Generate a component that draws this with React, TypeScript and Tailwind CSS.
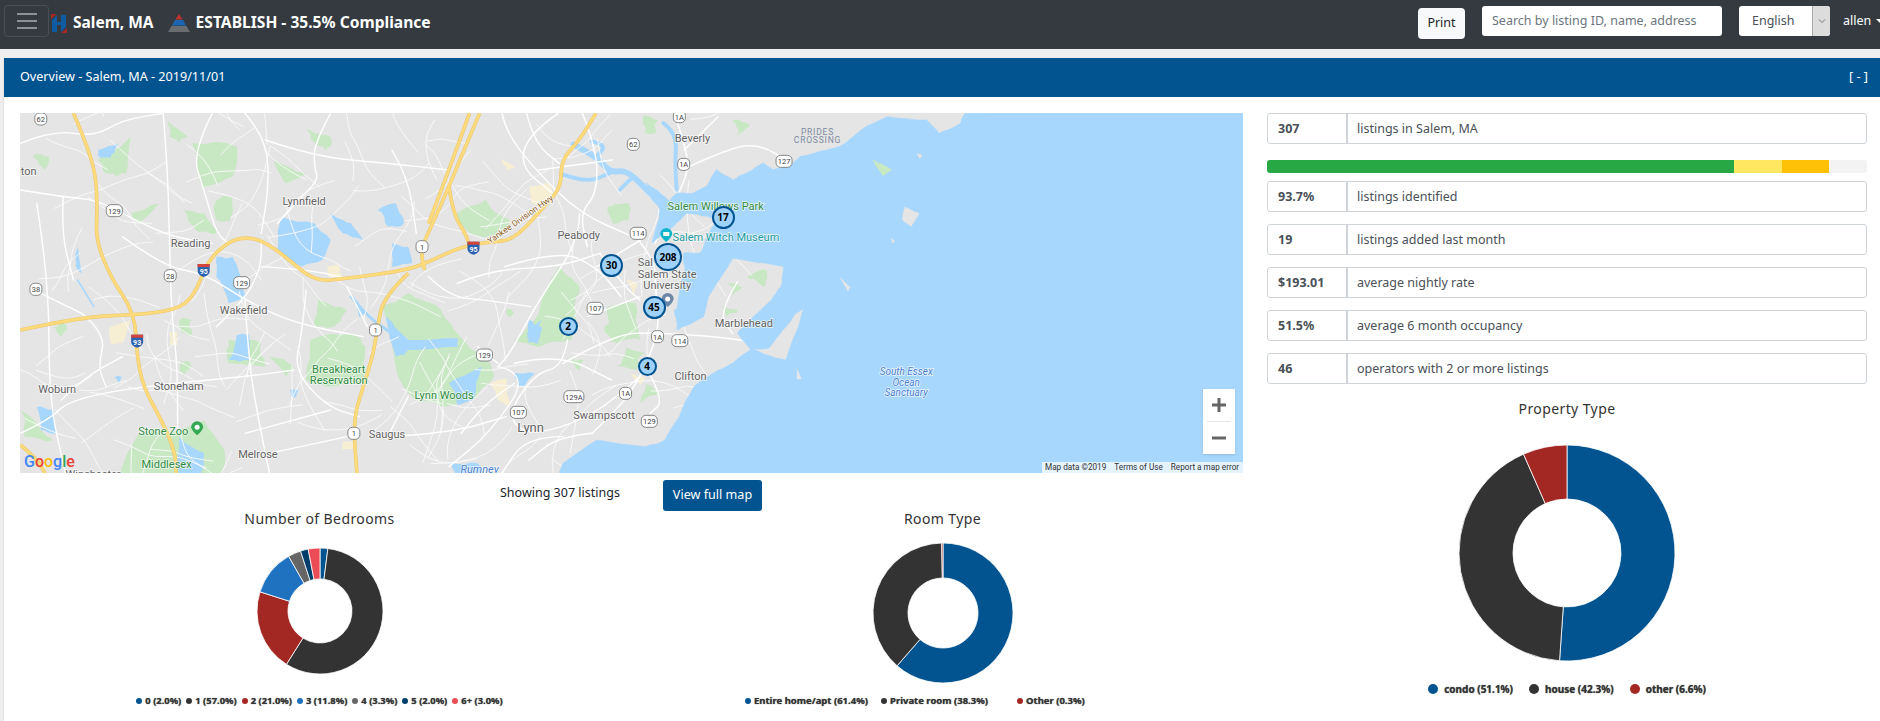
import React from "react";

// reference zoom crops -> map coordinates
type Pt = [number, number];
const z3 = (x: number, y: number): Pt => [x / 2.45 - 20, y / 3 - 13];
const z4 = (x: number, y: number): Pt => [480 + x / 2.063, y / 3 - 13];
const z10 = (x: number, y: number): Pt => [540 + x / 3, y / 3];

const pts = (fn: (x: number, y: number) => Pt, a: number[]) => {
  const out: Pt[] = [];
  for (let i = 0; i < a.length; i += 2) out.push(fn(a[i], a[i + 1]));
  return out;
};

// fixed seed so the map texture is the same on every render
let seed = 1234;
const rnd = () => {
  seed = (seed * 16807) % 2147483647;
  return seed / 2147483647;
};

const rough = (p: Pt[], amp: number, rounds = 2) => {
  let cur = p;
  let a = amp;
  for (let r = 0; r < rounds; r++) {
    const next: Pt[] = [];
    cur.forEach((c, i) => {
      const n = cur[(i + 1) % cur.length];
      next.push(c);
      next.push([(c[0] + n[0]) / 2 + (rnd() - 0.5) * a, (c[1] + n[1]) / 2 + (rnd() - 0.5) * a]);
    });
    cur = next;
    a *= 0.6;
  }
  return cur;
};

const smooth = (p: Pt[]) => {
  let d = `M${p[0][0]} ${p[0][1]}`;
  for (let i = 1; i < p.length - 1; i++) {
    d += `Q${p[i][0]} ${p[i][1]} ${(p[i][0] + p[i + 1][0]) / 2} ${(p[i][1] + p[i + 1][1]) / 2}`;
  }
  const l = p[p.length - 1];
  return d + `L${l[0]} ${l[1]}`;
};

const straight = (p: Pt[]) => "M" + p.map((c) => `${c[0]} ${c[1]}`).join("L") + "Z";

const coast: Pt[] = [
  ...pts(z4, [960, 40, 950, 70, 905, 100, 880, 60, 800, 50, 745, 90]),
  ...pts(z10, [840, 100, 780, 115, 720, 130, 690, 160, 640, 170, 610, 150, 560, 180, 520, 200, 470, 170, 440, 220, 400, 240, 350, 240, 330, 265, 300, 240, 260, 210, 270, 250, 300, 290, 290, 340, 275, 390, 340, 340, 380, 300, 440, 310, 470, 320, 440, 370, 420, 420, 370, 420, 375, 470, 360, 520, 350, 590]),
  ...pts(z4, [360, 630, 365, 690, 420, 650, 430, 590, 470, 500, 480, 475, 550, 490, 585, 500, 580, 560, 560, 600, 510, 670, 490, 700, 515, 745, 555, 745, 610, 640, 628, 625, 620, 660, 590, 780, 570, 775, 520, 745, 480, 790, 440, 820, 400, 860, 370, 950, 340, 1020, 300, 1040, 200, 1020, 130, 1090, 120, 1130]),
];
const sea: Pt[] = [...rough(coast, 2, 2).slice(0, -3), ...pts(z4, [120, 1130, 1600, 1130, 1600, 30])];

const lakes: Pt[][] = [
  pts(z3, [530, 470, 570, 470, 590, 530, 600, 600, 560, 610, 530, 530]),
  pts(z3, [690, 350, 770, 370, 810, 420, 790, 480, 740, 500, 680, 450]),
  pts(z3, [810, 340, 860, 370, 890, 420, 840, 400]),
  pts(z3, [960, 430, 1000, 440, 1010, 490, 960, 500]),
  pts(z3, [925, 330, 970, 310, 990, 370, 950, 380]),
  pts(z3, [945, 650, 1000, 720, 1120, 715, 1125, 740, 1000, 750, 970, 770]),
  pts(z3, [1100, 850, 1180, 800, 1160, 900, 1120, 915]),
  pts(z3, [440, 1010, 500, 1060, 490, 1130, 430, 1130]),
  pts(z3, [90, 920, 130, 930, 140, 1000, 100, 990]),
  pts(z3, [580, 705, 610, 705, 610, 780, 560, 780]),
  pts(z3, [240, 150, 290, 130, 270, 175, 245, 175]),
  pts(z3, [1290, 700, 1325, 660, 1320, 730, 1295, 730]),
  pts(z3, [860, 580, 900, 640, 880, 650]),
  pts(z3, [1260, 820, 1310, 820, 1280, 860]),
  pts(z3, [1100, 1085, 1170, 1090, 1190, 1130, 1120, 1130]),
  pts(z4, [30, 820, 70, 825, 40, 860]),
  pts(z4, [60, 660, 85, 680, 80, 720, 60, 720]),
  pts(z3, [710, 870, 730, 870, 720, 895]),
  pts(z3, [190, 440, 200, 520, 185, 500]),
  pts(z3, [280, 830, 300, 830, 290, 850]),
];

const rivers: [Pt[], number][] = [
  [pts(z10, [40, 95, 110, 130, 150, 180, 200, 170, 270, 240]), 6],
  [pts(z10, [10, 185, 80, 210, 150, 180]), 4],
  [pts(z10, [95, 85, 140, 95, 110, 130]), 4],
  [pts(z10, [180, 230, 220, 190]), 4],
  [pts(z10, [310, 30, 350, 60, 345, 150, 350, 230]), 4],
  [pts(z3, [860, 590, 900, 650, 960, 700]), 3],
  [pts(z3, [190, 540, 230, 620]), 1.5],
];

const parks: Pt[][] = [
  pts(z3, [930, 620, 1000, 580, 1080, 630, 1120, 700, 1190, 780, 1210, 830, 1160, 900, 1080, 920, 1000, 880, 970, 800, 960, 700]),
  pts(z3, [760, 720, 860, 700, 895, 740, 900, 840, 800, 860, 750, 840]),
  pts(z3, [1110, 350, 1190, 300, 1250, 360, 1230, 410, 1150, 400]),
  pts(z3, [470, 130, 580, 140, 570, 230, 500, 260, 480, 200]),
  pts(z3, [1320, 640, 1370, 500, 1420, 560, 1410, 640, 1400, 720, 1320, 740, 1260, 720]),
  pts(z3, [290, 1130, 340, 1000, 420, 1000, 500, 960, 550, 1050, 540, 1130]),
  pts(z3, [240, 180, 320, 110, 310, 220, 260, 220]),
  pts(z3, [410, 60, 460, 110, 440, 130, 415, 110]),
  pts(z3, [530, 300, 570, 290, 560, 370, 530, 360]),
  pts(z3, [670, 180, 750, 220, 700, 250]),
  pts(z3, [750, 85, 810, 110, 800, 150, 765, 120]),
  pts(z3, [450, 330, 500, 340, 530, 400, 480, 390]),
  pts(z3, [320, 340, 390, 310, 340, 370]),
  pts(z3, [780, 600, 850, 630, 820, 680, 770, 680]),
  pts(z3, [660, 770, 720, 800, 700, 830]),
  pts(z3, [560, 720, 640, 730, 650, 800, 560, 790]),
  pts(z3, [50, 930, 100, 990, 130, 1020, 60, 1010]),
  pts(z3, [80, 170, 120, 170, 110, 210]),
  pts(z3, [1490, 320, 1540, 310, 1540, 360, 1500, 370]),
  pts(z3, [1480, 680, 1550, 630, 1568, 720, 1510, 730]),
  pts(z3, [440, 660, 470, 660, 470, 700, 445, 700]),
  pts(z3, [1400, 770, 1430, 780, 1420, 810]),
  pts(z3, [440, 780, 470, 800, 450, 830]),
  pts(z3, [130, 680, 160, 670, 150, 710]),
  pts(z3, [1240, 630, 1260, 640, 1245, 650]),
  pts(z4, [220, 620, 280, 610, 270, 690, 230, 730]),
  pts(z4, [260, 740, 300, 760, 280, 810, 240, 800]),
  pts(z4, [510, 530, 550, 510, 545, 560]),
  pts(z4, [480, 60, 515, 80, 490, 110]),
  pts(z4, [295, 50, 325, 60, 320, 100, 300, 100]),
  pts(z4, [235, 310, 265, 320, 245, 360]),
  pts(z4, [300, 850, 330, 880, 290, 910]),
  pts(z4, [470, 550, 500, 560, 480, 590]),
  pts(z4, [460, 620, 490, 630, 470, 650]),
];

const islands: Pt[][] = [
  pts(z4, [835, 320, 865, 340, 848, 380, 830, 360]),
  pts(z4, [700, 530, 722, 560, 718, 575]),
  pts(z4, [612, 805, 622, 835, 612, 838]),
  pts(z4, [860, 160, 872, 165, 866, 178]),
  pts(z4, [808, 415, 815, 425, 808, 430]),
];

const patches: Pt[][] = [
  pts(z3, [270, 680, 320, 660, 300, 730, 270, 730]),
  pts(z3, [1295, 270, 1345, 250, 1355, 290, 1310, 315]),
  pts(z3, [800, 500, 830, 495, 840, 535, 805, 530]),
  pts(z3, [415, 695, 435, 695, 435, 735, 415, 735]),
  pts(z3, [1200, 850, 1240, 835, 1250, 920, 1220, 900]),
  pts(z3, [840, 1025, 870, 1025, 870, 1050, 840, 1050]),
  pts(z4, [260, 540, 285, 550, 275, 590]),
  pts(z4, [0, 170, 30, 200, 15, 210]),
  pts(z4, [60, 260, 105, 265, 95, 315, 65, 310]),
  pts(z4, [270, 820, 300, 830, 290, 855]),
];

const roads: Pt[][] = [
  [50, 270, 150, 290, 240, 300, 330, 360, 420, 410, 520, 430],
  [520, 40, 470, 160, 500, 270, 530, 400, 560, 430],
  [400, 40, 410, 200, 415, 400, 420, 640, 435, 800, 435, 1000],
  [600, 40, 650, 110, 660, 250, 640, 400],
  [810, 40, 770, 130, 770, 200, 780, 240, 740, 290, 680, 370],
  [650, 120, 770, 170, 950, 190, 1100, 210],
  [960, 150, 1000, 230, 1020, 400],
  [1230, 40, 1240, 100, 1320, 220, 1420, 340, 1550, 410],
  [1290, 40, 1310, 130, 1370, 190],
  [1320, 210, 1500, 180],
  [1420, 340, 1420, 420, 1320, 600, 1250, 760, 1220, 800],
  [1050, 530, 1100, 590, 1190, 600, 1300, 620],
  [1120, 550, 1200, 510, 1370, 500, 1470, 460],
  [50, 1000, 120, 960, 170, 900, 340, 860, 600, 830, 720, 810],
  [100, 580, 200, 640],
  [155, 290, 150, 400, 180, 540],
  [90, 310, 120, 540, 120, 900, 160, 1118],
  [300, 410, 400, 500, 500, 520, 600, 600, 720, 670, 890, 710],
  [600, 600, 610, 800, 640, 1000, 660, 1118],
  [530, 680, 600, 600, 640, 500, 640, 420],
  [750, 570, 740, 700, 720, 810, 800, 920, 880, 950],
  [850, 560, 900, 680],
  [600, 1000, 720, 960, 810, 930],
  [660, 1060, 850, 1010],
  [950, 1010, 1000, 890],
  [1220, 800, 1300, 820, 1200, 1000, 1100, 1100],
  [1390, 720, 1380, 800, 1310, 820, 1240, 950, 1300, 1010, 1450, 950, 1568, 830],
  [1380, 1010, 1290, 1010, 1230, 1118],
  [950, 1010, 1100, 1000, 1240, 950],
  [1170, 740, 1220, 790],
  [1440, 650, 1568, 590],
  [1470, 460, 1530, 560, 1568, 600],
  [50, 130, 130, 90, 230, 110, 300, 60, 400, 40],
  [200, 640, 260, 700, 240, 800, 260, 860],
  [150, 900, 210, 830, 300, 770],
  [640, 500, 760, 510, 850, 535],
  [1130, 1000, 1180, 920, 1260, 850],
].map((a) => pts(z3, a));

const roads4: Pt[][] = [
  [360, 40, 380, 130, 390, 200, 375, 260, 345, 350, 320, 430],
  [390, 200, 480, 140, 540, 135, 600, 190],
  [280, 410, 320, 480, 320, 560, 330, 680, 300, 800, 260, 900, 190, 1000],
  [320, 700, 480, 710, 555, 745],
  [490, 545, 450, 640, 480, 700],
  [200, 500, 290, 420],
  [300, 800, 340, 900, 310, 940],
  [380, 150, 450, 50],
  [120, 40, 60, 100, 40, 200, 110, 280],
  [170, 40, 200, 150, 200, 280, 165, 340, 180, 440],
  [10, 500, 120, 450, 200, 500, 250, 590],
  [130, 790, 240, 700, 320, 700],
  [30, 790, 120, 760, 230, 840],
  [190, 1000, 120, 1010, 60, 1080],
].map((a) => pts(z4, a));

// thin local streets, the sea is painted over whatever falls offshore
const streets: Pt[][] = Array.from({ length: 150 }, () => {
  let x = rnd() * 700;
  let y = rnd() * 360;
  let h = rnd() * Math.PI * 2;
  const line: Pt[] = [[x, y]];
  const steps = 3 + Math.floor(rnd() * 4);
  for (let i = 0; i < steps; i++) {
    h += (rnd() - 0.5) * 1.1;
    const l = 10 + rnd() * 16;
    x += Math.cos(h) * l;
    y += Math.sin(h) * l;
    line.push([x, y]);
  }
  return line;
});

const highways: Pt[][] = [
  [180, 40, 205, 110, 235, 220, 238, 330, 235, 420, 270, 530, 330, 640, 335, 760, 350, 860, 400, 970, 430, 1060, 432, 1130],
  [50, 690, 200, 650, 330, 645, 430, 630, 475, 590, 510, 480, 560, 425, 600, 412, 640, 420, 700, 470, 770, 545, 850, 535, 1000, 510, 1060, 480, 1130, 440, 1200, 425, 1260, 420, 1340, 310, 1375, 260, 1375, 180, 1420, 120, 1460, 40],
  [1175, 40, 1130, 170, 1100, 260, 1060, 370, 1030, 450, 1040, 510],
  [1150, 40, 1100, 210, 1050, 370],
  [1100, 260, 1110, 340, 1140, 400, 1150, 435],
  [1000, 520, 940, 590, 925, 680, 915, 760, 890, 860, 865, 960, 875, 1130],
  [50, 1035, 90, 1075, 115, 1130],
].map((a) => pts(z3, a));

const labels: { p: Pt; t: string; c?: string; s?: number; i?: boolean }[] = [
  { p: z3(745, 302), t: "Lynnfield" },
  { p: z3(467, 428), t: "Reading" },
  { p: z3(597, 631), t: "Wakefield" },
  { p: z3(438, 857), t: "Stoneham" },
  { p: z3(140, 866), t: "Woburn" },
  { p: z3(948, 1002), t: "Saugus" },
  { p: z3(1300, 985), t: "Lynn", s: 13 },
  { p: z3(1480, 946), t: "Swampscott" },
  { p: z3(1418, 405), t: "Peabody" },
  { p: z3(70, 214), t: "ton" },
  { p: z3(632, 1063), t: "Melrose" },
  { p: z3(228, 1122), t: "Winchester" },
  { p: z3(830, 808), t: "Breakheart", c: "#2e8b3d" },
  { p: z3(830, 840), t: "Reservation", c: "#2e8b3d" },
  { p: z3(1088, 885), t: "Lynn Woods", c: "#2e8b3d" },
  { p: z3(400, 992), t: "Stone Zoo", c: "#2e8b3d" },
  { p: z3(408, 1092), t: "Middlesex", c: "#2e8b3d" },
  { p: z3(1175, 1108), t: "Rumney", c: "#4a7fd0", i: true },
  { p: z4(397, 115), t: "Beverly" },
  { p: z4(445, 319), t: "Salem Willows Park", c: "#2e8b3d" },
  { p: z4(466, 410), t: "Salem Witch Museum", c: "#1c9a9e" },
  { p: z4(300, 485), t: "Sal" },
  { p: z4(345, 523), t: "Salem State" },
  { p: z4(345, 555), t: "University" },
  { p: z4(503, 670), t: "Marblehead" },
  { p: z4(393, 828), t: "Clifton" },
  { p: z4(838, 814), t: "South Essex", c: "#4a7fd0", i: true, s: 10 },
  { p: z4(838, 846), t: "Ocean", c: "#4a7fd0", i: true, s: 10 },
  { p: z4(838, 877), t: "Sanctuary", c: "#4a7fd0", i: true, s: 10 },
];

const shields: { p: Pt; t: string }[] = [
  { p: z3(100, 57), t: "62" },
  { p: z3(280, 332), t: "129" },
  { p: z3(417, 527), t: "28" },
  { p: z3(88, 568), t: "38" },
  { p: z3(592, 548), t: "129" },
  { p: z3(1458, 625), t: "107" },
  { p: z3(1187, 765), t: "129" },
  { p: z3(1406, 890), t: "129A" },
  { p: z3(1270, 937), t: "107" },
  { p: z3(1034, 440), t: "1" },
  { p: z3(920, 690), t: "1" },
  { p: z3(867, 1000), t: "1" },
  { p: z4(370, 50), t: "1A" },
  { p: z4(275, 133), t: "62" },
  { p: z4(379, 193), t: "1A" },
  { p: z4(586, 184), t: "127" },
  { p: z4(285, 400), t: "114" },
  { p: z4(325, 710), t: "1A" },
  { p: z4(371, 722), t: "114" },
  { p: z4(259, 880), t: "1A" },
  { p: z4(308, 964), t: "129" },
];

const interstates: { p: Pt; t: string }[] = [
  { p: z3(1160, 443), t: "95" },
  { p: z3(499, 510), t: "95" },
  { p: z3(336, 722), t: "93" },
];

const markers = [
  { t: "208", x: 648, y: 144, r: 14 },
  { t: "17", x: 703, y: 104, r: 11.5 },
  { t: "30", x: 591.5, y: 152, r: 11.5 },
  { t: "45", x: 634, y: 194, r: 11.5 },
  { t: "2", x: 548, y: 213, r: 9.5 },
  { t: "4", x: 627, y: 253, r: 9.5 },
];

const roughPatches = patches.map((p) => straight(rough(p, 3)));
const roughParks = parks.map((p) => straight(rough(p, 6)));
const roughLakes = lakes.map((p) => straight(rough(p, 4)));
const roughIslands = islands.map((p) => straight(rough(p, 1)));

function MapCanvas() {
  return (
    <svg viewBox="0 0 1223 360" className="absolute inset-0 w-full h-full" style={{ fontFamily: "Roboto, sans-serif" }}>
      <rect width="1223" height="360" fill="#e5e5e5" />
      {roughPatches.map((d, i) => <path key={i} d={d} fill="#f6efd3" />)}
      {roughParks.map((d, i) => <path key={i} d={d} fill="#c8e7c3" />)}
      {roughLakes.map((d, i) => <path key={i} d={d} fill="#a8d7fd" />)}
      {rivers.map(([p, w], i) => <path key={i} d={smooth(p)} fill="none" stroke="#a8d7fd" strokeWidth={w} strokeLinecap="round" />)}
      {streets.map((p, i) => <path key={i} d={smooth(p)} fill="none" stroke="#fafafa" strokeWidth="0.9" strokeLinecap="round" />)}
      {roads.map((p, i) => <path key={i} d={smooth(p)} fill="none" stroke="#fff" strokeWidth="1.4" strokeLinecap="round" />)}
      {roads4.map((p, i) => <path key={i} d={smooth(p)} fill="none" stroke="#fff" strokeWidth="1.5" strokeLinecap="round" />)}
      <path d={straight(sea)} fill="#a8d7fd" stroke="#a8d7fd" strokeWidth="0.6" strokeLinejoin="round" />
      {roughIslands.map((d, i) => <path key={i} d={d} fill="#e5e5e5" />)}
      <path d={straight(rough(pts(z4, [768, 178, 810, 210, 790, 228]), 2))} fill="#c8e7c3" />
      {highways.map((p, i) => <path key={i} d={smooth(p)} fill="none" stroke="#efc468" strokeWidth="3.6" />)}
      {highways.map((p, i) => <path key={i} d={smooth(p)} fill="none" stroke="#fcdb7c" strokeWidth="2.6" />)}
      <text x="470" y="131" transform="rotate(-35 470 131)" fontSize="8.5" fill="#8a5a1c" stroke="#fff" strokeWidth="1.5" paintOrder="stroke">Yankee Division Hwy</text>
      {labels.map((l, i) => (
        <text key={i} x={l.p[0]} y={l.p[1] + 4} textAnchor="middle" fontSize={l.s ?? 11} fontStyle={l.i ? "italic" : "normal"} fill={l.c ?? "#616161"} stroke="#fff" strokeOpacity="0.8" strokeWidth="1.4" paintOrder="stroke">{l.t}</text>
      ))}
      <text x={z4(655, 97)[0]} y={z4(655, 97)[1] + 3} textAnchor="middle" fontSize="8.5" letterSpacing="0.8" fill="#7d8aa0">PRIDES</text>
      <text x={z4(655, 119)[0]} y={z4(655, 119)[1] + 3} textAnchor="middle" fontSize="8.5" letterSpacing="0.8" fill="#7d8aa0">CROSSING</text>
      {shields.map((s, i) => {
        const w = s.t.length > 2 ? 16 + (s.t.length - 3) * 4 : 12;
        return (
          <g key={i}>
            <rect x={s.p[0] - w / 2} y={s.p[1] - 6} width={w} height="12" rx="4.5" fill="#fff" stroke="#77797b" strokeWidth="0.9" />
            <text x={s.p[0]} y={s.p[1] + 3} textAnchor="middle" fontSize="7.5" fill="#444">{s.t}</text>
          </g>
        );
      })}
      {interstates.map((s, i) => (
        <g key={i}>
          <path d={`M${s.p[0] - 6} ${s.p[1] - 6}h12v7q0 4-6 6q-6-2-6-6z`} fill="#2b62b0" />
          <rect x={s.p[0] - 6} y={s.p[1] - 6} width="12" height="3" fill="#d3443b" />
          <text x={s.p[0]} y={s.p[1] + 4} textAnchor="middle" fontSize="7" fontWeight="700" fill="#fff">{s.t}</text>
        </g>
      ))}
      {/* poi pins */}
      <g transform={`translate(${z4(343, 405)[0]} ${z4(343, 405)[1]})`}>
        <path d="M-6 -1a6 6 0 1 1 12 0q-1 4-6 8q-5-4-6-8z" fill="#12b5cb" />
        <rect x="-3" y="-3" width="6" height="4" fill="#fff" />
      </g>
      <g transform={`translate(${z4(346, 600)[0]} ${z4(346, 600)[1]})`}>
        <path d="M-6 -1a6 6 0 1 1 12 0q-1 4-6 8q-5-4-6-8z" fill="#6b86a6" />
        <circle r="2.5" cy="-1" fill="#fff" />
      </g>
      <g transform={`translate(${z3(483, 985)[0]} ${z3(483, 985)[1]})`}>
        <path d="M-6 -1a6 6 0 1 1 12 0q-1 4-6 8q-5-4-6-8z" fill="#34a853" />
        <circle r="2.5" cy="-1" fill="#fff" />
      </g>
    </svg>
  );
}

function Donut({ size, r, inner, data }: { size: number; r: number; inner: number; data: { v: number; c: string }[] }) {
  const total = data.reduce((s, d) => s + d.v, 0);
  const c = size / 2;
  let acc = 0;
  const pos = (rad: number, a: number) => `${c + rad * Math.sin(a)} ${c - rad * Math.cos(a)}`;
  return (
    <svg width={size} height={size} className="block">
      {data.map((d, i) => {
        const a0 = (acc / total) * Math.PI * 2;
        acc += d.v;
        const a1 = (acc / total) * Math.PI * 2;
        const large = a1 - a0 > Math.PI ? 1 : 0;
        return (
          <path
            key={i}
            d={`M${pos(r, a0)}A${r} ${r} 0 ${large} 1 ${pos(r, a1)}L${pos(inner, a1)}A${inner} ${inner} 0 ${large} 0 ${pos(inner, a0)}Z`}
            fill={d.c}
            stroke="#fff"
            strokeWidth="0.8"
          />
        );
      })}
    </svg>
  );
}

const BLUE = "#01548f";
const DARK = "#333333";
const RED = "#a32824";

const bedrooms = [
  { v: 2, c: BLUE, t: "0 (2.0%)" },
  { v: 57, c: DARK, t: "1 (57.0%)" },
  { v: 21, c: RED, t: "2 (21.0%)" },
  { v: 11.8, c: "#1f72bf", t: "3 (11.8%)" },
  { v: 3.3, c: "#666666", t: "4 (3.3%)" },
  { v: 2, c: "#003f6b", t: "5 (2.0%)" },
  { v: 3, c: "#ec4c55", t: "6+ (3.0%)" },
];
const roomTypes = [
  { v: 61.4, c: BLUE, t: "Entire home/apt (61.4%)" },
  { v: 38.3, c: DARK, t: "Private room (38.3%)" },
  { v: 0.3, c: RED, t: "Other (0.3%)" },
];
const propertyTypes = [
  { v: 51.1, c: BLUE, t: "condo (51.1%)" },
  { v: 42.3, c: DARK, t: "house (42.3%)" },
  { v: 6.6, c: RED, t: "other (6.6%)" },
];

const stats = [
  { v: "93.7%", t: "listings identified" },
  { v: "19", t: "listings added last month" },
  { v: "$193.01", t: "average nightly rate" },
  { v: "51.5%", t: "average 6 month occupancy" },
  { v: "46", t: "operators with 2 or more listings" },
];

function StatRow({ v, t }: { v: string; t: string }) {
  return (
    <div className="flex h-[31px] rounded-[3px] border border-[#ced4da] text-[12.5px] text-[#495057]">
      <div className="w-[80px] flex items-center pl-[10px] pt-px font-bold border-r-2 border-[#ced4da]">{v}</div>
      <div className="flex items-center pl-[9px] pt-px">{t}</div>
    </div>
  );
}

function SmallLegend({ items }: { items: { c: string; t: string }[] }) {
  return (
    <div className="flex justify-center gap-[5px] text-[9.4px] font-bold text-[#333] leading-[14px] whitespace-nowrap [text-shadow:0_0_1px_#555]">
      {items.map((d) => (
        <div key={d.t} className="flex items-center gap-[3px]">
          <span className="w-[6px] h-[6px] rounded-full" style={{ background: d.c }} />
          {d.t}
        </div>
      ))}
    </div>
  );
}

export default function App() {
  return (
    <div className="h-[721px] overflow-hidden bg-[#eeeeee] flex flex-col" style={{ fontFamily: '"Noto Sans", sans-serif' }}>
      {/* top navbar */}
      <nav className="h-[49px] shrink-0 bg-[#343a40] flex items-start text-white overflow-hidden">
        <button className="ml-[4px] mt-[5px] w-[45px] h-[32px] rounded border border-[#4a4f55] flex flex-col items-center justify-center gap-[5px]">
          <span className="block w-[20px] h-[2px] bg-[#8e9194]" />
          <span className="block w-[20px] h-[2px] bg-[#8e9194]" />
          <span className="block w-[20px] h-[2px] bg-[#8e9194]" />
        </button>
        <svg width="16" height="19" viewBox="0 0 16 19" className="ml-[2px] mt-[14px]">
          <path d="M0 0h6l-6 5z" fill="#a32824" />
          <path d="M16 19h-6l6-5z" fill="#a32824" />
          <path d="M1 6l5-5v7h4V1h5v12l-5 5v-7H6v7H1z" fill="#0f5ba3" />
        </svg>
        <span className="ml-[6px] mt-[12px] text-[15.5px] leading-[20px] font-bold">Salem, MA</span>
        <svg width="24" height="19" viewBox="0 0 24 19" className="ml-[13px] mt-[14px]">
          <path d="M12 0l3.5 5.5h-7z" fill="#c0322c" />
          <path d="M8 6h8l3 5.5H5z" fill="#1b66b3" />
          <path d="M4.6 12h14.8l3.6 6H1z" fill="#6a6d70" />
        </svg>
        <span className="ml-[5px] mt-[12px] text-[15.6px] leading-[20px] font-bold whitespace-nowrap">ESTABLISH - 35.5% Compliance</span>
        <div className="ml-auto flex items-start shrink-0 w-[462px]">
          <button className="mt-[8px] w-[47px] h-[31px] shrink-0 rounded bg-[#f8f9fa] text-[#212529] text-[12.5px]">Print</button>
          <div className="ml-[17px] mt-[6px] w-[240px] h-[30px] shrink-0 rounded-[3px] bg-white flex items-center pl-[10px] text-[12.5px] text-[#6c757d] whitespace-nowrap">Search by listing ID, name, address</div>
          <div className="ml-[17px] mt-[6px] w-[91px] h-[30px] shrink-0 rounded-[3px] bg-white flex overflow-hidden text-[12.5px] text-[#495057]">
            <div className="flex-1 flex items-center pl-[13px]">English</div>
            <div className="w-[18px] bg-[#dcdcdc] border-l border-[#aaa] flex items-center justify-center">
              <svg width="8" height="6" viewBox="0 0 8 6"><path d="M1 1.5l3 3 3-3" fill="none" stroke="#777" strokeWidth="1" /></svg>
            </div>
          </div>
          <span className="ml-[13px] mt-[11px] shrink-0 text-[12.5px] leading-[20px] whitespace-nowrap">allen</span>
          <span className="ml-[5px] mt-[19px] shrink-0 w-0 h-0 border-x-[4px] border-x-transparent border-t-[4px] border-t-white" />
        </div>
      </nav>

      <div className="flex-1 mt-[9px] ml-[3px] bg-white flex flex-col rounded-t-[2px] border-l border-[#e2e2e2]">
        <div className="h-[39px] shrink-0 bg-[#01548f] text-white text-[12.6px] flex items-center justify-between pl-[16px] pr-[12px]">
          <span>Overview - Salem, MA - 2019/11/01</span>
          <span>[ - ]</span>
        </div>
        <div className="flex pl-[16px] pt-[16px]">
          {/* left column */}
          <div className="w-[1223px] shrink-0">
            <div className="relative h-[360px] overflow-hidden">
              <MapCanvas />
              {markers.map((m) => (
                <div
                  key={m.t}
                  className="absolute rounded-full border-2 border-[#01548f] bg-[#9fd2fb] flex items-center justify-center text-[10px] font-bold text-black"
                  style={{ left: m.x - m.r, top: m.y - m.r, width: m.r * 2, height: m.r * 2 }}
                >
                  {m.t}
                </div>
              ))}
              <div className="absolute left-[4px] bottom-[2px] text-[16px] font-medium leading-[18px]" style={{ fontFamily: "Roboto, sans-serif" }}>
                <span className="text-[#4285f4]">G</span><span className="text-[#ea4335]">o</span><span className="text-[#fbbc05]">o</span><span className="text-[#4285f4]">g</span><span className="text-[#34a853]">l</span><span className="text-[#ea4335]">e</span>
              </div>
              <div className="absolute right-[8px] top-[276px] w-[32px] h-[65px] bg-white flex flex-col items-center shadow-sm">
                <div className="h-[32px] flex items-center justify-center">
                  <svg width="14" height="14" viewBox="0 0 14 14"><path d="M5.5 0h3v5.5H14v3H8.5V14h-3V8.5H0v-3h5.5z" fill="#666" /></svg>
                </div>
                <div className="w-[24px] h-px bg-[#e6e6e6]" />
                <div className="h-[32px] flex items-center justify-center">
                  <svg width="14" height="14" viewBox="0 0 14 14"><path d="M0 5.5h14v3H0z" fill="#666" /></svg>
                </div>
              </div>
              <div className="absolute right-0 bottom-0 h-[11px] w-[201px] bg-white/70 flex items-center pl-[3px] text-[8.2px] leading-none text-[#333] whitespace-nowrap" style={{ fontFamily: "Roboto, sans-serif" }}>
                <span>Map data ©2019</span>
                <span className="ml-[8px]">Terms of Use</span>
                <span className="ml-[8px]">Report a map error</span>
              </div>
            </div>

            <div className="flex items-start h-[37px]">
              <span className="ml-[480px] mt-[11px] w-[163px] text-[12.5px] leading-[18px] text-[#212529] whitespace-nowrap">Showing 307 listings</span>
              <button className="mt-[7px] w-[99px] h-[31px] rounded-[3px] bg-[#01548f] text-white text-[12.6px]">View full map</button>
            </div>

            <div className="flex">
              <div className="w-[602px] flex flex-col items-center">
                <h3 className="text-[14px] leading-[18px] tracking-[0.4px] text-[#333]">Number of Bedrooms</h3>
                <div className="mt-[18px]"><Donut size={130} r={63} inner={32} data={bedrooms} /></div>
                <div className="mt-[18px]"><SmallLegend items={bedrooms} /></div>
              </div>
              <div className="ml-[23px] w-[604px] flex flex-col">
                <h3 className="text-center text-[14px] leading-[18px] tracking-[0.4px] text-[#333]">Room Type</h3>
                <div className="mt-[13px] self-center"><Donut size={144} r={70} inner={35} data={roomTypes} /></div>
                <div className="mt-[9px] ml-[103px] flex text-[9.5px] font-bold text-[#333] leading-[14px] whitespace-nowrap [text-shadow:0_0_1px_#555]">
                  {roomTypes.map((d) => (
                    <div key={d.t} className="w-[136px] flex items-center gap-[3px]">
                      <span className="w-[6px] h-[6px] rounded-full" style={{ background: d.c }} />
                      {d.t}
                    </div>
                  ))}
                </div>
              </div>
            </div>
          </div>

          {/* right column */}
          <div className="ml-[24px] w-[600px] shrink-0">
            <StatRow v="307" t="listings in Salem, MA" />
            <div className="mt-[16px] mb-[8px] h-[13px] flex rounded-[3px] overflow-hidden bg-[#f3f3f3]">
              <div className="w-[467px] bg-[#28a745]" />
              <div className="w-[48px] bg-[#ffe761]" />
              <div className="w-[47px] bg-[#ffc107]" />
            </div>
            <div className="flex flex-col gap-[12px]">
              {stats.map((s) => <StatRow key={s.t} v={s.v} t={s.t} />)}
            </div>
            <div className="flex flex-col items-center">
              <h3 className="mt-[16px] text-[14px] leading-[18px] tracking-[0.4px] text-[#333]">Property Type</h3>
              <div className="mt-[25px]"><Donut size={220} r={108} inner={54} data={propertyTypes} /></div>
              <div className="mt-[19px] flex gap-[16px] text-[10px] font-bold text-[#333] leading-[14px] whitespace-nowrap [text-shadow:0_0_1px_#555]">
                {propertyTypes.map((d) => (
                  <div key={d.t} className="flex items-center gap-[6px]">
                    <span className="w-[10px] h-[10px] rounded-full" style={{ background: d.c }} />
                    {d.t}
                  </div>
                ))}
              </div>
            </div>
          </div>
        </div>
      </div>
    </div>
  );
}
